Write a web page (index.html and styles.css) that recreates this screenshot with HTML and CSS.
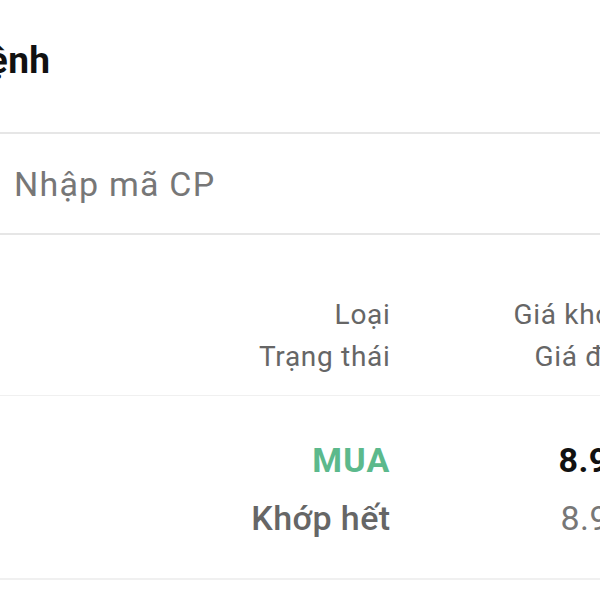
FILE: index.html
```html
<!DOCTYPE html>
<html lang="vi">
<head>
<meta charset="utf-8">
<title>Sổ lệnh</title>
<link rel="stylesheet" href="styles.css">
</head>
<body>
<div class="screen">
  <header class="topbar">
    <h1 class="title">Sổ lệnh</h1>
  </header>
  <div class="search">
    <input class="search-input" type="text" placeholder="Nhập mã CP">
  </div>
  <div class="table-head">
    <div class="col col-type">
      <span>Loại</span>
      <span>Trạng thái</span>
    </div>
    <div class="col col-price">
      <span>Giá khớp</span>
      <span>Giá đặt</span>
    </div>
  </div>
  <div class="table-row">
    <div class="col col-type">
      <span class="side-buy">MUA</span>
      <span class="status">Khớp hết</span>
    </div>
    <div class="col col-price">
      <span class="price-match">8.90</span>
      <span class="price-order">8.90</span>
    </div>
  </div>
</div>
</body>
</html>
```
FILE: styles.css
```css
html, body {
  margin: 0;
  padding: 0;
  background: #ffffff;
  overflow: hidden;
}
body {
  font-family: Roboto, "Noto Sans", sans-serif;
  color: #222;
}
.screen {
  width: 600px;
  display: flex;
  flex-direction: column;
}
.topbar {
  height: 132px;
  border-bottom: 2px solid #e6e6e6;
  display: flex;
  align-items: flex-start;
}
.title {
  margin: 0;
  margin-left: -76px;
  padding-top: 39px;
  font-size: 37px;
  line-height: 44px;
  font-weight: 700;
  letter-spacing: 0.3px;
  color: #111;
  white-space: nowrap;
}
.search {
  height: 99px;
  border-bottom: 2px solid #e6e6e6;
  display: flex;
  align-items: center;
}
.search-input {
  border: 0;
  outline: none;
  background: transparent;
  padding: 0 0 0 14px;
  margin: 0;
  width: 100%;
  font-family: Roboto, "Noto Sans", sans-serif;
  font-size: 34px;
  letter-spacing: 1.2px;
  color: #333;
}
.search-input::placeholder {
  color: #777;
}
.table-head,
.table-row {
  display: grid;
  grid-template-columns: 390px 238px;
  width: 628px;
}
.table-head {
  padding: 59px 0 17px;
  border-bottom: 1px solid #f0f0f0;
  font-size: 28px;
  line-height: 42px;
  letter-spacing: 0.7px;
  color: #666;
}
.table-row {
  padding: 35px 0 31px;
  border-bottom: 2px solid #f0f0f0;
  font-size: 34px;
  line-height: 58px;
  letter-spacing: 0.4px;
}
.col {
  display: flex;
  flex-direction: column;
  align-items: flex-end;
  white-space: nowrap;
}
.col span {
  margin-right: -0.5px;
}
.side-buy {
  color: #5cb98c;
  font-weight: 700;
  letter-spacing: 1.2px;
}
.status {
  color: #666;
  font-weight: 500;
}
.price-match {
  color: #111;
  font-weight: 700;
}
.price-order {
  color: #777;
}
```
